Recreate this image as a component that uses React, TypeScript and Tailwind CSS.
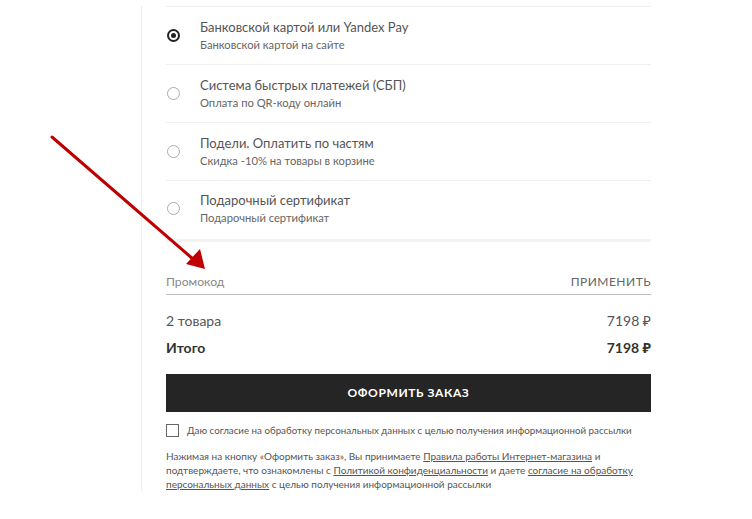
const methods = [
  { title: "Банковской картой или Yandex Pay", sub: "Банковской картой на сайте", checked: true },
  { title: "Система быстрых платежей (СБП)", sub: "Оплата по QR-коду онлайн", checked: false },
  { title: "Подели. Оплатить по частям", sub: "Скидка -10% на товары в корзине", checked: false },
  { title: "Подарочный сертификат", sub: "Подарочный сертификат", checked: false },
];

function Radio({ checked }: { checked: boolean }) {
  if (checked) {
    return (
      <span className="flex h-[13px] w-[13px] items-center justify-center rounded-full border-2 border-[#222]">
        <span className="h-[5px] w-[5px] rounded-full bg-[#222]" />
      </span>
    );
  }
  return <span className="h-[13px] w-[13px] rounded-full border border-[#aaa]" />;
}

// red pointer drawn over the page
function Arrow() {
  return (
    <svg className="pointer-events-none absolute left-0 top-0" width="752" height="519">
      <line x1="52" y1="137" x2="193" y2="259" stroke="#c00000" strokeWidth="3" strokeLinecap="round" />
      <polygon points="205,269 186,264 200,249" fill="#c00000" />
    </svg>
  );
}

export default function App() {
  return (
    <div
      className="relative h-[519px] w-[752px] overflow-hidden bg-white text-[#444]"
      style={{ fontFamily: "Lato, 'Noto Sans', sans-serif" }}
    >
      <div className="pl-[141px]">
        <div className="w-[534px] border-l border-[#eee] px-6">
          <div className="mt-[6px] border-t border-[#f0f0f0]">
            {methods.map((m, i) => (
              <div
                key={m.title}
                className={
                  i === methods.length - 1
                    ? "flex h-[61px] items-center border-b-[3px] border-[#f3f3f3] pb-[3px]"
                    : "flex h-[58px] items-center border-b border-[#f0f0f0]"
                }
              >
                <div className="flex w-[34px] justify-start pl-[1px]">
                  <Radio checked={m.checked} />
                </div>
                <div className="flex flex-col gap-[3px]">
                  <span className="text-[13px] leading-[16px] text-[#555]">{m.title}</span>
                  <span className="text-[11.2px] leading-[14px] text-[#666]">{m.sub}</span>
                </div>
              </div>
            ))}
          </div>

          <div className="mt-[32px] flex items-center justify-between border-b border-[#bbb] pb-[4px]">
            <span className="text-[12.2px] leading-[16px] text-[#888]">Промокод</span>
            <span className="text-[12px] leading-[16px] tracking-[0.04em] text-[#666]">ПРИМЕНИТЬ</span>
          </div>

          <div className="mt-[17px] flex items-center justify-between text-[14px] leading-[18px] text-[#555]">
            <span>2 товара</span>
            <span>7198 ₽</span>
          </div>
          <div className="mt-[9px] flex items-center justify-between text-[14px] font-bold leading-[18px] text-[#333]">
            <span>Итого</span>
            <span>7198 ₽</span>
          </div>

          <button className="mt-[17px] flex h-[38px] w-full items-center justify-center bg-[#252525] text-[12px] font-bold tracking-[0.05em] text-white">
            ОФОРМИТЬ ЗАКАЗ
          </button>

          <label className="mt-[11px] flex items-center gap-[8px]">
            <span className="h-[13px] w-[13px] border border-[#666]" />
            <span className="text-[9.75px] leading-[14px] text-[#555]">
              Даю согласие на обработку персональных данных с целью получения информационной рассылки
            </span>
          </label>

          <p className="mt-[12px] text-[10px] leading-[14px] text-[#555]">
            Нажимая на кнопку «Оформить заказ», Вы принимаете{" "}
            <span className="underline">Правила работы Интернет-магазина</span> и подтверждаете, что
            ознакомлены с <span className="underline">Политикой конфиденциальности</span> и даете{" "}
            <span className="underline">согласие на обработку персональных данных</span> с целью
            получения информационной рассылки
          </p>
        </div>
      </div>
      <Arrow />
    </div>
  );
}
